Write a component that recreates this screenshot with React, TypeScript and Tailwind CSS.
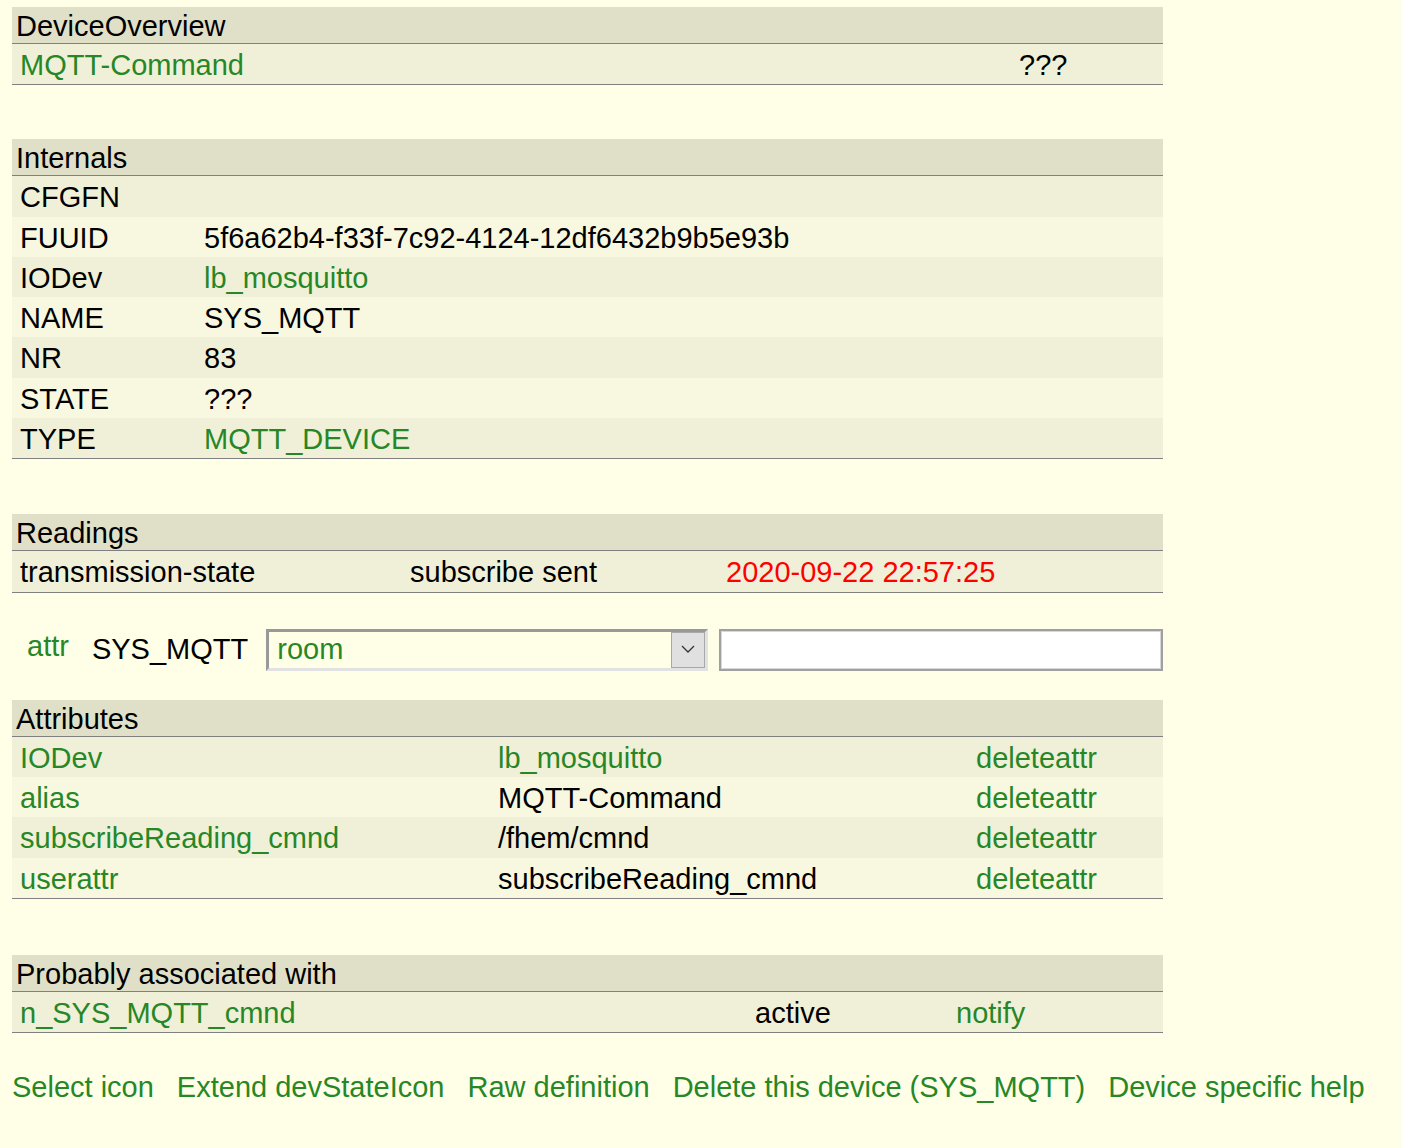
import React from "react";

const font = { fontFamily: '"Liberation Sans", Arial, sans-serif' };

type Cell = { text: string; link?: boolean; color?: string };

function Block({
  title,
  cols,
  rows,
}: {
  title: string;
  cols: string;
  rows: { cells: Cell[]; odd: boolean }[];
}) {
  return (
    <div className="w-[1151px]">
      <div className="h-[37px] pl-[4px] pt-[2px] leading-[34px] bg-[#E0E0C8] border-b border-[#808080]">
        {title}
      </div>
      <div className="border-b border-[#808080]">
        {rows.map((r, i) => (
          <div
            key={i}
            className={`grid h-[40.3px] items-center pl-[8px] ${cols} ${
              r.odd ? "bg-[#F0F0D8]" : "bg-[#F8F8E0]"
            }`}
          >
            {r.cells.map((c, j) => (
              <div
                key={j}
                className={`whitespace-nowrap ${
                  c.link ? "text-[#278727]" : c.color ? c.color : "text-black"
                }`}
              >
                {c.text}
              </div>
            ))}
          </div>
        ))}
      </div>
    </div>
  );
}

export default function App() {
  const internals: [string, string, boolean?][] = [
    ["CFGFN", ""],
    ["FUUID", "5f6a62b4-f33f-7c92-4124-12df6432b9b5e93b"],
    ["IODev", "lb_mosquitto", true],
    ["NAME", "SYS_MQTT"],
    ["NR", "83"],
    ["STATE", "???"],
    ["TYPE", "MQTT_DEVICE", true],
  ];
  const attrs: [string, string, boolean?][] = [
    ["IODev", "lb_mosquitto", true],
    ["alias", "MQTT-Command"],
    ["subscribeReading_cmnd", "/fhem/cmnd"],
    ["userattr", "subscribeReading_cmnd"],
  ];

  return (
    <div
      className="min-h-[1148px] w-full bg-[#FFFFE7] text-black text-[29px] pt-[7px] pl-[12px]"
      style={font}
    >
      <Block
        title="DeviceOverview"
        cols="grid-cols-[999px_1fr]"
        rows={[
          {
            odd: true,
            cells: [{ text: "MQTT-Command", link: true }, { text: "???" }],
          },
        ]}
      />

      <div className="mt-[54px]">
        <Block
          title="Internals"
          cols="grid-cols-[184px_1fr]"
          rows={internals.map(([k, v, l], i) => ({
            odd: i % 2 === 0,
            cells: [{ text: k }, { text: v, link: !!l }],
          }))}
        />
      </div>

      <div className="mt-[55px]">
        <Block
          title="Readings"
          cols="grid-cols-[390px_316px_1fr]"
          rows={[
            {
              odd: true,
              cells: [
                { text: "transmission-state" },
                { text: "subscribe sent" },
                { text: "2020-09-22 22:57:25", color: "text-[#FF0000]" },
              ],
            },
          ]}
        />
      </div>

      <div className="mt-[36px] flex items-center h-[42px] w-[1151px]">
        <span className="ml-[15px] text-[#278727] -mt-[6px]">attr</span>
        <span className="ml-[23px]">SYS_MQTT</span>
        <div className="ml-[18px] flex items-center w-[442px] h-[42px] border-[3px] border-t-[#999999] border-l-[#999999] border-b-[#E2E2E2] border-r-[#E2E2E2] bg-[#FFFFE7]">
          <span className="flex-1 pl-[8px] text-[#278727] leading-none">room</span>
          <div className="w-[34px] h-[36px] bg-[#E0E0E0] border border-[#A8A8A8] flex items-center justify-center">
            <svg width="14" height="9" viewBox="0 0 14 9">
              <path d="M1 1 L7 7 L13 1" fill="none" stroke="#333" strokeWidth="1.3" />
            </svg>
          </div>
        </div>
        <div className="ml-[11px] w-[444px] h-[42px] bg-white border-[2px] border-[#A0A0A0] shadow-[inset_0_0_0_1px_#D8D8D8]" />
      </div>

      <div className="mt-[29px]">
        <Block
          title="Attributes"
          cols="grid-cols-[478px_478px_1fr]"
          rows={attrs.map(([k, v, l], i) => ({
            odd: i % 2 === 0,
            cells: [
              { text: k, link: true },
              { text: v, link: !!l },
              { text: "deleteattr", link: true },
            ],
          }))}
        />
      </div>

      <div className="mt-[56px]">
        <Block
          title="Probably associated with"
          cols="grid-cols-[735px_201px_1fr]"
          rows={[
            {
              odd: true,
              cells: [
                { text: "n_SYS_MQTT_cmnd", link: true },
                { text: "active" },
                { text: "notify", link: true },
              ],
            },
          ]}
        />
      </div>

      <div className="mt-[33px] flex gap-[23px] text-[#278727] whitespace-nowrap -ml-[12px] pl-[12px]">
        <span>Select icon</span>
        <span>Extend devStateIcon</span>
        <span>Raw definition</span>
        <span>Delete this device (SYS_MQTT)</span>
        <span>Device specific help</span>
      </div>
    </div>
  );
}
